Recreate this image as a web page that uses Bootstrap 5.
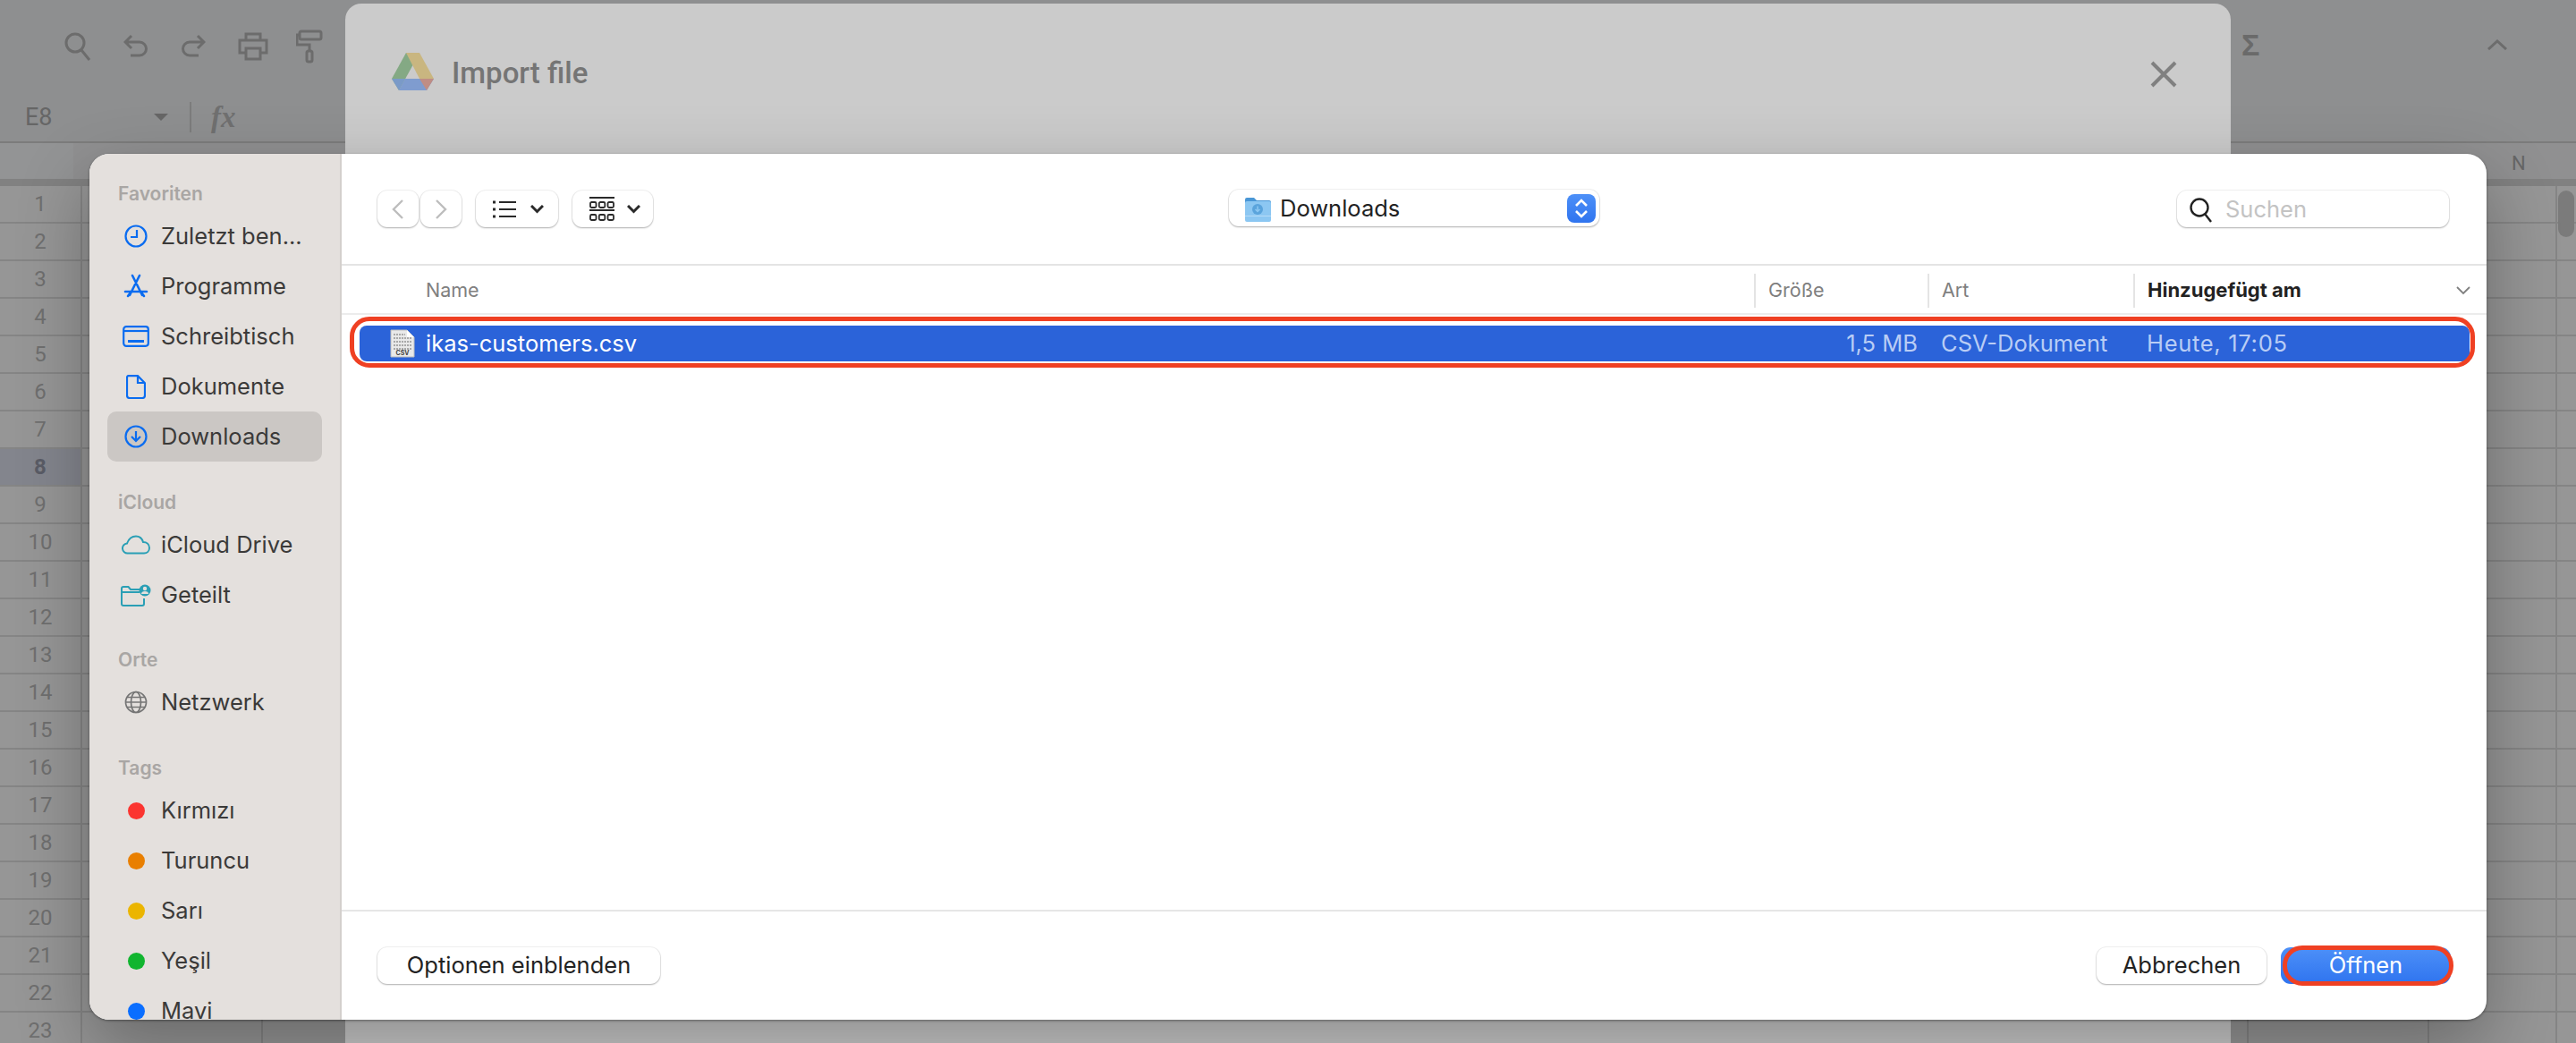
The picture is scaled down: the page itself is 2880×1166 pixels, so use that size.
<!DOCTYPE html>
<html lang="en">
<head>
  <meta charset="UTF-8">
  <title>Import file</title>
  <link href="https://cdn.jsdelivr.net/npm/bootstrap@5.3.0/dist/css/bootstrap.min.css" rel="stylesheet">
  <style>
    html, body { width: 2880px; height: 1166px; overflow: hidden; }
    body { background: #8e8f90; font-family: Inter, "Liberation Sans", sans-serif; position: relative; }

    /* sheet behind the dialogs */
    .sheet-toolbar { height: 104px; padding-left: 72px; gap: 36px; }
    .sheet-toolbar svg { fill: none; stroke: #6c6c6c; stroke-width: 3; }
    .paint-icon { margin-left: -5px; }
    .sigma { position: absolute; left: 2506px; top: 30px; font: 700 34px "Liberation Sans", sans-serif; color: #6a6a6a; line-height: 40px; }
    .caret-up { position: absolute; left: 2781px; top: 44px; }
    .formula-bar { height: 56px; padding-left: 28px; border-bottom: 2px solid #7c7c7c; font-family: Roboto, sans-serif; color: #666; }
    .cell-ref { font-size: 27px; width: 144px; }
    .drop-tri { width: 0; height: 0; border-left: 8px solid transparent; border-right: 8px solid transparent; border-top: 8px solid #666; margin-right: 24px; }
    .formula-sep { width: 2px; height: 34px; background: #7c7c7c; margin-right: 22px; }
    .fx-mark { font: italic 700 33px "Liberation Serif", serif; color: #707070; }
    .col-head { height: 40px; background: #909091; }
    .col-corner { width: 82px; background: #939495; }
    .col-n { position: absolute; left: 2808px; top: 170px; font: 22px Roboto, sans-serif; color: #666; }
    .freeze-band { height: 8px; background: #818181; }
    #sheet-rows { background: #969696; }
    .sheet-row { height: 42px; border-bottom: 2px solid #858585; }
    .row-num { width: 92px; font: 24px Roboto, sans-serif; color: #6f6f6f; border-right: 2px solid #858585; }
    .row-num.is-active { background: #83858d; color: #5a5c66; font-weight: 700; }
    .row-cells { background: repeating-linear-gradient(90deg, transparent 0 199.85px, #858585 199.85px 201.85px); }
    .sheet-scroll { width: 23px; border-left: 2px solid #858585; }
    .scroll-thumb { position: absolute; left: 2860px; top: 213px; width: 18px; height: 52px; border-radius: 9px; background: #7b7b7b; }

    /* drive dialog */
    .import-dialog { position: absolute; left: 386px; top: 4px; width: 2108px; height: 1200px; border-radius: 18px 18px 0 0; background: #cbcbcb; padding: 54px 52px 0; }
    .import-title { font: 500 33px Roboto, sans-serif; color: #757575; margin-left: 20px; padding-top: 4px; }
    .import-close { margin-left: auto; margin-right: 8px; margin-top: 6px; }

    /* file picker */
    .file-picker { position: absolute; left: 100px; top: 172px; width: 2680px; height: 968px; border-radius: 22px; overflow: hidden; background: #fff; }
    .picker-shadow { position: absolute; left: 100px; top: 172px; width: 2680px; height: 968px; border-radius: 22px; box-shadow: 0 30px 80px rgba(0,0,0,.3), 0 1px 3px rgba(0,0,0,.4); }
    .side-panel { width: 282px; flex: none; background: #e4e0dd; padding: 26px 20px 0; border-right: 2px solid #d4d0cd; }
    .side-label { height: 38px; font-size: 21px; font-weight: 600; color: #a9a6a4; line-height: 38px; padding-left: 12px; }
    .side-item { height: 56px; font-size: 25.5px; color: #3b3a39; border-radius: 10px; }
    .side-item.is-open { background: #cbc7c4; }
    .side-icon { width: 60px; padding-left: 4px; flex: none; display: flex; justify-content: center; }
    .tag-dot { width: 19px; height: 19px; border-radius: 50%; }
    .gap-group { margin-top: 27px; }
    .gap-orte { margin-top: 26px; }

    .picker-main { min-width: 0; }
    .picker-top { height: 125px; padding: 0 42px 0 40px; border-bottom: 2px solid #e4e4e4; position: relative; }
    .mac-btn { height: 41px; padding: 0; border: 0; border-radius: 11px; background: #fff; box-shadow: 0 1px 2px rgba(0,0,0,.28), 0 0 0 1px rgba(0,0,0,.05); color: #222; font-size: 25.5px; display: inline-flex; align-items: center; justify-content: center; }
    .mac-btn:hover { background: #fff; color: #222; }
    .nav-btn { width: 46px; }
    .nav-next { margin-left: 2px; }
    .view-list { width: 92px; gap: 16px; margin-left: 16px; padding-left: 2px; }
    .view-grid { width: 90px; gap: 14px; margin-left: 16px; padding-left: 4px; }
    .path-select { position: absolute; left: 992px; top: 40px; width: 414px; justify-content: flex-start; padding: 2px 0 0 18px; gap: 10px; }
    .path-step { position: absolute; right: 4px; top: 5px; width: 32px; height: 32px; border-radius: 8px; background: linear-gradient(#4d90f8, #2f74ef); display: flex; align-items: center; justify-content: center; }
    .search-box { width: 304px; height: 41px; padding: 2px 0 0 14px; gap: 15px; border: 0; border-radius: 11px; box-shadow: 0 1px 2px rgba(0,0,0,.28), 0 0 0 1px rgba(0,0,0,.05); font-size: 25.5px; color: #c3c3c3; }

    .list-head { height: 55px; padding-top: 2px; border-bottom: 2px solid #ececec; font-size: 21.5px; color: #808080; }
    .cell-fill { flex: 1 1 auto; padding-left: 94px; }
    .cell-size { width: 194px; flex: none; }
    .cell-kind { width: 230px; flex: none; }
    .cell-date { width: 395px; flex: none; }
    .head-cell { height: 38px; border-left: 2px solid #e4e4e4; padding-left: 14px; display: flex; align-items: center; }
    .head-sort { color: #222; font-weight: 700; font-size: 22px; justify-content: space-between; padding-right: 18px; }
    .list-body { flex: 1 1 auto; position: relative; height: 667px; padding: 12px 19px 0 20px; border-bottom: 2px solid #e6e6e6; }
    .file-row { height: 40px; border-radius: 8px; background: #2b63d9; color: #b9cdf5; font-size: 25.5px; }
    .file-icon { width: 74px; flex: none; padding-left: 34px; }
    .file-name { flex: 1 1 auto; color: #fff; }
    .file-size { width: 100px; flex: none; text-align: right; padding-right: 15px; }
    .file-kind { width: 226px; flex: none; padding-left: 11px; }
    .file-date { width: 376px; flex: none; padding-left: 15px; letter-spacing: .7px; }
    .red-ring { position: absolute; border: 5px solid #ef4023; pointer-events: none; }
    .ring-row { left: 9px; top: 2px; width: 2376px; height: 57px; border-radius: 22px; }
    .ring-open { right: 37px; top: 38px; width: 191px; height: 45px; border-radius: 22px; }

    .picker-foot { height: 121px; padding: 40px 40px 0; position: relative; }
    .foot-options { width: 316px; }
    .foot-cancel { width: 190px; margin-left: auto; }
    .foot-open { width: 190px; margin-left: 16px; background: linear-gradient(#4d90f8, #2f74ef); color: #fff; box-shadow: none; }
    .foot-open:hover { background: linear-gradient(#4d90f8, #2f74ef); color: #fff; }
  </style>
</head>
<body>
  <!-- Spreadsheet behind the dialogs -->
  <div class="d-flex align-items-center sheet-toolbar">
    <svg width="30" height="32" viewBox="0 0 30 32"><circle cx="12" cy="12" r="10"/><path d="M19 20l9 11"/></svg>
    <svg width="28" height="28" viewBox="0 0 28 28"><path d="M3 9h15a7 7 0 0 1 0 15H8M9 2L2 9l7 7"/></svg>
    <svg width="28" height="28" viewBox="0 0 28 28"><path d="M25 9H10a7 7 0 0 0 0 15h10M19 2l7 7-7 7"/></svg>
    <svg width="34" height="32" viewBox="0 0 34 32"><path d="M9 9V2h16v7M9 23H2V9h30v14h-7M9 18h16v12H9z"/></svg>
    <svg class="paint-icon" width="30" height="38" viewBox="0 0 30 38"><rect x="4" y="2" width="24" height="9" rx="2"/><path d="M4 6H1v11h14v6"/><rect x="12" y="24" width="6" height="12" rx="2"/></svg>
  </div>
  <div class="sigma">Σ</div>
  <svg class="caret-up" width="22" height="12" viewBox="0 0 22 12" fill="none" stroke="#6c6c6c" stroke-width="3"><path d="M1 11l10-9 10 9"/></svg>
  <div class="d-flex align-items-center formula-bar">
    <span class="cell-ref">E8</span>
    <span class="drop-tri"></span>
    <span class="formula-sep"></span>
    <span class="fx-mark">fx</span>
  </div>
  <div class="d-flex col-head"><div class="col-corner"></div></div>
  <div class="col-n">N</div>
  <div class="freeze-band"></div>
  <div id="sheet-rows"></div>
  <div class="scroll-thumb"></div>

  <!-- Import file dialog -->
  <div class="import-dialog">
    <div class="d-flex align-items-center">
      <svg width="47" height="42" viewBox="0 0 47 42">
        <polygon points="16,0 31,0 24,13 8,42 0,29" fill="#84a984"/>
        <polygon points="16,0 31,0 47,29 31,29" fill="#c9b680"/>
        <polygon points="8,42 39,42 47,29 15,29" fill="#7f9ccf"/>
        <polygon points="39,42 47,29 37,29 31,29" fill="#bf8d85"/>
        <polygon points="0,29 15,29 8,42" fill="#7a9ac8"/>
      </svg>
      <span class="import-title">Import file</span>
      <svg class="import-close" width="30" height="30" viewBox="0 0 30 30" stroke="#808080" stroke-width="4"><path d="M2 2l26 26M28 2L2 28"/></svg>
    </div>
  </div>

  <div class="picker-shadow"></div>

  <!-- File picker sheet -->
  <div class="file-picker d-flex">
    <aside class="side-panel">
      <div class="side-label">Favoriten</div>
      <div class="side-item d-flex align-items-center">
        <span class="side-icon"><svg width="26" height="26" viewBox="0 0 26 26" fill="none" stroke="#0a6cf0" stroke-width="2.2"><circle cx="13" cy="13" r="11.5"/><path d="M14 6v8H7"/></svg></span>Zuletzt ben...
      </div>
      <div class="side-item d-flex align-items-center">
        <span class="side-icon"><svg width="28" height="28" viewBox="0 0 28 28" fill="none" stroke="#0a6cf0" stroke-width="2.6" stroke-linecap="round"><path d="M10 2l11 22M18 2L7 24M2 20h24M5 25l3-4M23 25l-3-4"/></svg></span>Programme
      </div>
      <div class="side-item d-flex align-items-center">
        <span class="side-icon"><svg width="30" height="24" viewBox="0 0 30 24" fill="none" stroke="#0a6cf0" stroke-width="2.2"><rect x="1.2" y="1.2" width="27.6" height="21.6" rx="3"/><path d="M1 6h28"/><rect x="6" y="16" width="18" height="3" fill="#0a6cf0" stroke="none"/></svg></span>Schreibtisch
      </div>
      <div class="side-item d-flex align-items-center">
        <span class="side-icon"><svg width="22" height="27" viewBox="0 0 22 27" fill="none" stroke="#0a6cf0" stroke-width="2.2"><path d="M3 1.2h10l8 8V23a3 3 0 0 1-3 3H4a3 3 0 0 1-3-3V3a2 2 0 0 1 2-2zM13 1.5V9h8"/></svg></span>Dokumente
      </div>
      <div class="side-item is-open d-flex align-items-center">
        <span class="side-icon"><svg width="26" height="26" viewBox="0 0 26 26" fill="none" stroke="#0a6cf0" stroke-width="2.2"><circle cx="13" cy="13" r="11.5"/><path d="M13 7v11M8 13l5 5 5-5"/></svg></span>Downloads
      </div>
      <div class="side-label gap-group">iCloud</div>
      <div class="side-item d-flex align-items-center">
        <span class="side-icon"><svg width="32" height="22" viewBox="0 0 32 22" fill="none" stroke="#2a9fb5" stroke-width="2"><path d="M7 20.5a5.5 5.5 0 0 1-1-11C8 4 12 1.5 16 1.5c4.500 0 7 3 8 6.500 4 0 7 2.500 7 6.500s-3 6-6 6z"/></svg></span>iCloud Drive
      </div>
      <div class="side-item d-flex align-items-center">
        <span class="side-icon"><svg width="34" height="25" viewBox="0 0 34 25" fill="none" stroke="#2a9fb5" stroke-width="2"><path d="M22 6H11L8.500 3H3a2 2 0 0 0-2 2v17a2 2 0 0 0 2 2h21a2 2 0 0 0 2-2v-6M1 9h20"/><circle cx="27" cy="7" r="6.500" fill="#2a9fb5" stroke="none"/><circle cx="27" cy="5" r="2.200" fill="#e4e0dd" stroke="none"/><path d="M23 11a4 3 0 0 1 8 0z" fill="#e4e0dd" stroke="none"/></svg></span>Geteilt
      </div>
      <div class="side-label gap-orte">Orte</div>
      <div class="side-item d-flex align-items-center">
        <span class="side-icon"><svg width="26" height="26" viewBox="0 0 26 26" fill="none" stroke="#757575" stroke-width="1.700"><circle cx="13" cy="13" r="11.500"/><ellipse cx="13" cy="13" rx="5.500" ry="11.500"/><path d="M3 7.500h20M1.500 13h23M3 18.500h20"/></svg></span>Netzwerk
      </div>
      <div class="side-label gap-group">Tags</div>
      <div class="side-item d-flex align-items-center"><span class="side-icon"><span class="tag-dot" style="background:#fb3530"></span></span>Kırmızı</div>
      <div class="side-item d-flex align-items-center"><span class="side-icon"><span class="tag-dot" style="background:#e97f00"></span></span>Turuncu</div>
      <div class="side-item d-flex align-items-center"><span class="side-icon"><span class="tag-dot" style="background:#ebb500"></span></span>Sarı</div>
      <div class="side-item d-flex align-items-center"><span class="side-icon"><span class="tag-dot" style="background:#11b52f"></span></span>Yeşil</div>
      <div class="side-item d-flex align-items-center"><span class="side-icon"><span class="tag-dot" style="background:#0a6eff"></span></span>Mavi</div>
    </aside>

    <main class="picker-main flex-grow-1 d-flex flex-column">
      <div class="picker-top d-flex align-items-center justify-content-between">
        <div class="d-flex align-items-center">
          <button class="btn mac-btn nav-btn"><svg width="14" height="24" viewBox="0 0 14 24" fill="none" stroke="#bdbdbd" stroke-width="2.400"><path d="M12 2L2 12l10 10"/></svg></button>
          <button class="btn mac-btn nav-btn nav-next"><svg width="14" height="24" viewBox="0 0 14 24" fill="none" stroke="#bdbdbd" stroke-width="2.400"><path d="M2 2l10 10L2 22"/></svg></button>
          <button class="btn mac-btn view-list">
            <svg width="26" height="20" viewBox="0 0 26 20" fill="none" stroke="#2a2a2a" stroke-width="2"><path d="M7 2h19M7 10h19M7 18h19"/><path d="M0 2h3M0 10h3M0 18h3" stroke-width="3"/></svg>
            <svg width="15" height="10" viewBox="0 0 15 10" fill="none" stroke="#2a2a2a" stroke-width="3"><path d="M1 1l6.500 6.500L14 1"/></svg>
          </button>
          <button class="btn mac-btn view-grid">
            <svg width="28" height="28" viewBox="0 0 28 28" fill="none" stroke="#2a2a2a" stroke-width="1.800"><path d="M0 1h28M0 15h28"/><rect x="1" y="6" width="6.500" height="6" rx="1.500"/><rect x="10.800" y="6" width="6.500" height="6" rx="1.500"/><rect x="20.500" y="6" width="6.500" height="6" rx="1.500"/><rect x="1" y="20" width="6.500" height="6" rx="1.500"/><rect x="10.800" y="20" width="6.500" height="6" rx="1.500"/><rect x="20.500" y="20" width="6.500" height="6" rx="1.500"/></svg>
            <svg width="15" height="10" viewBox="0 0 15 10" fill="none" stroke="#2a2a2a" stroke-width="3"><path d="M1 1l6.500 6.500L14 1"/></svg>
          </button>
        </div>
        <button class="btn mac-btn path-select">
          <svg width="29" height="28" viewBox="0 0 29 28"><path d="M0 3a2 2 0 0 1 2-2h8l3 3h14a2 2 0 0 1 2 2v4H0z" fill="#4a97d6"/><rect y="5" width="29" height="23" rx="2" fill="#8cc7f2"/><rect y="21" width="29" height="1" fill="#b7dcf7"/><circle cx="14" cy="14" r="6" fill="#5aa4dc"/><path d="M14 10.500v6M11.500 14l2.500 2.500 2.500-2.500" fill="none" stroke="#8cc7f2" stroke-width="1.500"/></svg>
          Downloads
          <span class="path-step"><svg width="16" height="24" viewBox="0 0 16 24" fill="none" stroke="#fff" stroke-width="2.600"><path d="M2 9l6-6 6 6M2 15l6 6 6-6"/></svg></span>
        </button>
        <div class="search-box d-flex align-items-center">
          <svg width="25" height="28" viewBox="0 0 25 28" fill="none" stroke="#222" stroke-width="2.400"><circle cx="11" cy="11" r="9.500"/><path d="M17 18l7 9"/></svg>
          Suchen
        </div>
      </div>

      <div class="list-head d-flex align-items-center">
        <div class="cell-fill">Name</div>
        <div class="cell-size head-cell">Größe</div>
        <div class="cell-kind head-cell">Art</div>
        <div class="cell-date head-cell head-sort">Hinzugefügt am
          <svg width="16" height="10" viewBox="0 0 16 10" fill="none" stroke="#808080" stroke-width="1.800"><path d="M1 1l7 7 7-7"/></svg>
        </div>
      </div>

      <div class="list-body">
        <div class="file-row d-flex align-items-center">
          <span class="file-icon"><svg class="d-block" width="28" height="32" viewBox="0 0 28 32"><path d="M1 1h18l8 8v22H1z" fill="#e9e9e9" stroke="#bdbdbd"/><path d="M19 1v8h8z" fill="#fff"/><path d="M4 6h13M4 10h20M4 14h20M4 18h20M4 22h20" stroke="#a9a9a9" stroke-width="2" stroke-dasharray="2 1"/><text x="14" y="29" font-size="7" font-weight="700" text-anchor="middle" fill="#444">CSV</text></svg></span>
          <span class="file-name">ikas-customers.csv</span>
          <span class="file-size">1,5 MB</span>
          <span class="file-kind">CSV-Dokument</span>
          <span class="file-date">Heute, 17:05</span>
        </div>
        <div class="red-ring ring-row"></div>
      </div>

      <div class="picker-foot d-flex">
        <button class="btn mac-btn foot-options">Optionen einblenden</button>
        <button class="btn mac-btn foot-cancel">Abbrechen</button>
        <button class="btn mac-btn foot-open">Öffnen</button>
        <div class="red-ring ring-open"></div>
      </div>
    </main>
  </div>

  <script>
    // row numbers of the sheet behind the dialogs
    let rows = document.getElementById('sheet-rows');
    for (let i = 1; i <= 23; i++) {
      let active = i === 8 ? ' is-active' : '';
      rows.innerHTML += `<div class="sheet-row d-flex"><div class="row-num d-flex align-items-center justify-content-center${active}">${i}</div><div class="row-cells flex-grow-1"></div><div class="sheet-scroll"></div></div>`;
    }
  </script>
  <script src="https://cdn.jsdelivr.net/npm/bootstrap@5.3.0/dist/js/bootstrap.bundle.min.js"></script>
</body>
</html>
